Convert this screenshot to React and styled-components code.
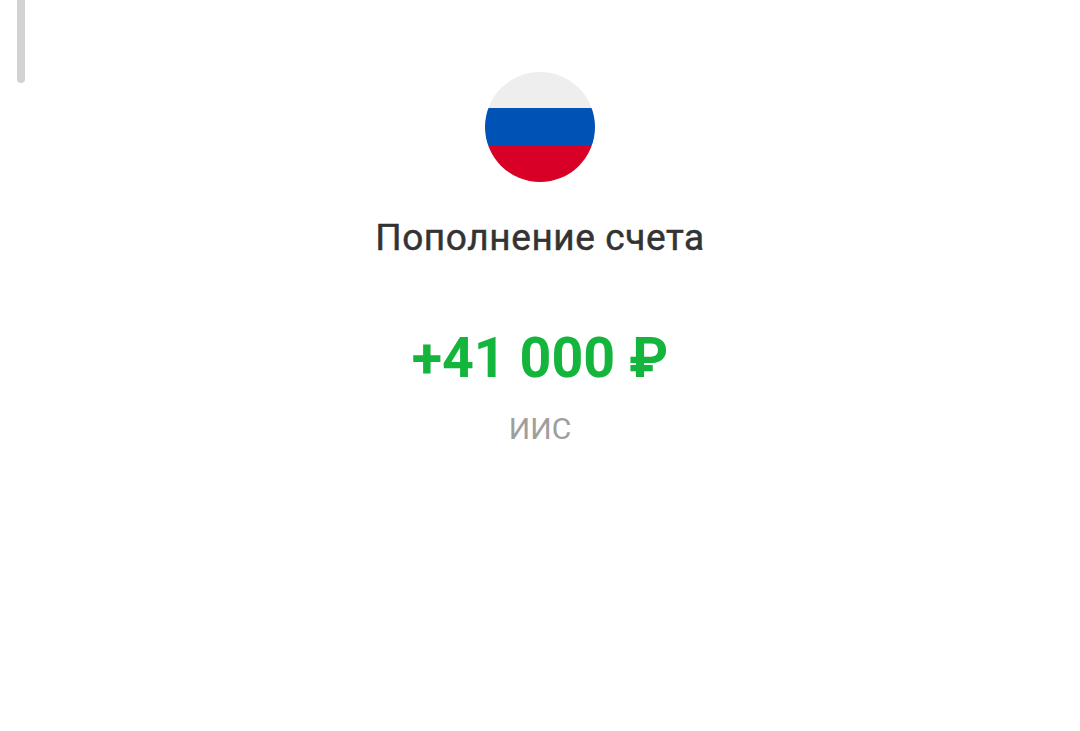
import React from "react";
import styled, { createGlobalStyle } from "styled-components";

const Global = createGlobalStyle`
  html, body {
    margin: 0;
    padding: 0;
    background: #fff;
  }
`;

export default function App() {
  return (
    <Page>
      <Global />
      <ScrollThumb />
      <Flag>
        <Stripe $color="#eeeeee" $height={36} />
        <Stripe $color="#0052b4" $height={38} />
        <Stripe $color="#d80027" $height={36} />
      </Flag>
      <Title>Пополнение счета</Title>
      <Amount>+41 000 ₽</Amount>
      <Account>ИИС</Account>
    </Page>
  );
}

const Page = styled.main`
  position: relative;
  width: 1080px;
  height: 731px;
  overflow: hidden;
  background: #fff;
  display: flex;
  flex-direction: column;
  align-items: center;
  padding-top: 72px;
  box-sizing: border-box;
  font-family: Roboto, "Liberation Sans", sans-serif;
`;

const ScrollThumb = styled.div`
  position: absolute;
  top: 0;
  left: 17px;
  width: 8px;
  height: 83px;
  background: #d2d2d2;
  border-radius: 0 0 4px 4px;
`;

const Flag = styled.div`
  width: 110px;
  height: 110px;
  border-radius: 50%;
  overflow: hidden;
  display: flex;
  flex-direction: column;
`;

const Stripe = styled.div`
  height: ${(p) => p.$height}px;
  background: ${(p) => p.$color};
`;

const Title = styled.h1`
  margin: 34px 0 0;
  font-size: 37px;
  line-height: 44px;
  font-weight: 400;
  letter-spacing: 0.6px;
  color: #333333;
  -webkit-text-stroke: 0.5px #333333;
`;

const Amount = styled.div`
  margin-top: 66px;
  font-size: 55.6px;
  line-height: 64px;
  font-weight: 700;
  color: #14b53c;
`;

const Account = styled.div`
  margin-top: 21px;
  font-size: 30px;
  line-height: 36px;
  color: #9e9e9e;
`;
